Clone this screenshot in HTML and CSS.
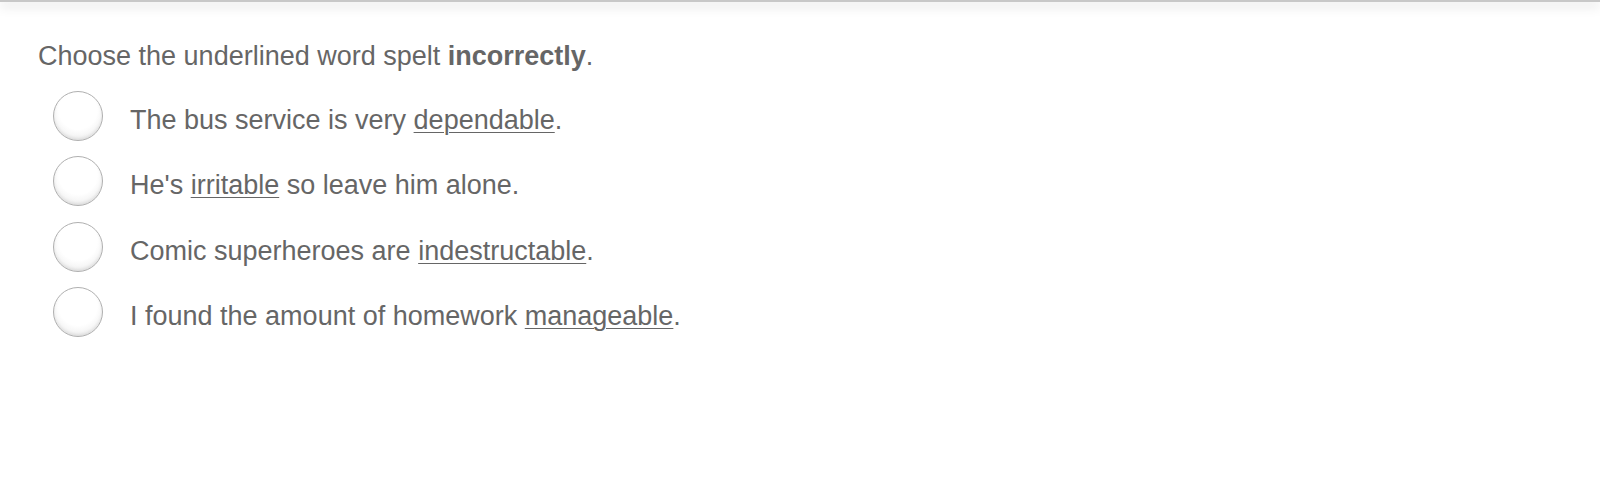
FILE: index.html
```html
<!DOCTYPE html>
<html lang="en">
<head>
<meta charset="utf-8">
<title>Spelling question</title>
<link rel="stylesheet" href="styles.css">
</head>
<body>
<div class="topbar"></div>
<main class="question">
  <p class="prompt">Choose the underlined word spelt <strong>incorrectly</strong>.</p>
  <ul class="options">
    <li class="option"><span class="radio"></span><span class="label">The bus service is very <u>dependable</u>.</span></li>
    <li class="option"><span class="radio"></span><span class="label">He's <u>irritable</u> so leave him alone.</span></li>
    <li class="option"><span class="radio"></span><span class="label">Comic superheroes are <u>indestructable</u>.</span></li>
    <li class="option"><span class="radio"></span><span class="label">I found the amount of homework <u>manageable</u>.</span></li>
  </ul>
</main>
</body>
</html>
```
FILE: styles.css
```css
html, body {
  margin: 0;
  padding: 0;
  background: #fff;
}
body {
  font-family: "Liberation Sans", Arial, Helvetica, sans-serif;
  color: #666;
  font-size: 27px;
}
.topbar {
  height: 2px;
  background: #c8c8c8;
  box-shadow: 0 3px 12px rgba(0, 0, 0, 0.3);
}
.question {
  padding: 0 0 0 38px;
}
.prompt {
  margin: 37px 0 0 0;
  line-height: 34px;
}
.prompt strong {
  font-weight: bold;
}
.options {
  list-style: none;
  margin: 18px 0 0 0;
  padding: 0 0 0 15px;
  display: flex;
  flex-direction: column;
  gap: 15.3px;
}
.option {
  display: flex;
  align-items: center;
  gap: 27px;
  height: 50px;
}
.radio {
  width: 48px;
  height: 48px;
  border-radius: 50%;
  border: 1px solid #b0b0b0;
  background: radial-gradient(circle at 50% 38%, #ffffff 50%, #f0f0f0 78%, #dddddd 100%);
  box-shadow: inset 0 -2px 3px rgba(0, 0, 0, 0.08);
  flex: none;
}
.label {
  padding-top: 9px;
}
.label u {
  text-decoration-thickness: 1px;
  text-underline-offset: 3px;
}
```
